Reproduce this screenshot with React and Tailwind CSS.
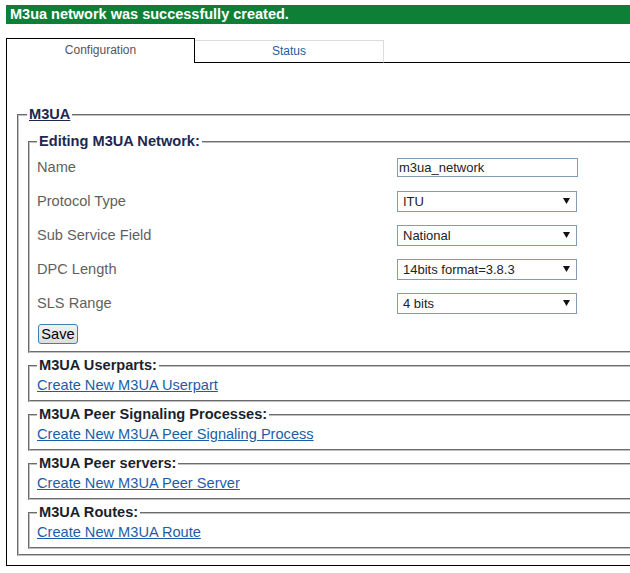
import { useState } from 'react';

const FIELDS = [
  { label: 'Name', kind: 'input', value: 'm3ua_network' },
  { label: 'Protocol Type', kind: 'select', value: 'ITU', options: ['ITU', 'ANSI'] },
  { label: 'Sub Service Field', kind: 'select', value: 'National', options: ['International', 'National', 'Reserved'] },
  { label: 'DPC Length', kind: 'select', value: '14bits format=3.8.3', options: ['14bits format=3.8.3', '14bits format=8.6', '24bits'] },
  { label: 'SLS Range', kind: 'select', value: '4 bits', options: ['4 bits', '5 bits', '8 bits'] },
];

const SECTIONS = [
  { title: 'M3UA Userparts:', link: 'Create New M3UA Userpart' },
  { title: 'M3UA Peer Signaling Processes:', link: 'Create New M3UA Peer Signaling Process' },
  { title: 'M3UA Peer servers:', link: 'Create New M3UA Peer Server' },
  { title: 'M3UA Routes:', link: 'Create New M3UA Route' },
];

function Select({ value, options }) {
  const [v, setV] = useState(value);
  return (
    <div className="relative w-[180px] h-[21px]">
      <select
        value={v}
        onChange={(e) => setV(e.target.value)}
        className="appearance-none block w-full h-full border border-[#7f9db9] bg-white pl-[5px] pr-[20px] text-[13px] text-[#222] outline-none"
      >
        {options.map(o => <option key={o}>{o}</option>)}
      </select>
      <svg className="pointer-events-none absolute right-[7px] top-[7px]" width="7" height="6" viewBox="0 0 7 6">
        <path d="M0 0H7L3.5 6Z" fill="#111" />
      </svg>
    </div>
  );
}

function Section({ title, link }) {
  return (
    <fieldset className="ml-[1px] mt-[4px] border-2 [border-style:groove] border-[#c0c0c0] pl-[7px] pt-[3px] pb-[6px] leading-[17px]">
      <legend className="px-[2px] text-[14.6px] leading-[17px] font-bold text-[#1d1f2e]">{title}</legend>
      <div className="text-[14.6px] leading-[17px]">
        <a href="#" className="text-[#1b5ea6] underline">{link}</a>
      </div>
    </fieldset>
  );
}

export default function App() {
  const [tab, setTab] = useState('config');

  return (
    <div className="w-[630px] h-[573px] overflow-hidden bg-white font-['Liberation_Sans',Arial,sans-serif]">
      <div className="w-[720px] ml-[6px] pt-[5px]">
        <div className="h-[19px] bg-[#0e7f37] px-[4px] text-[14.5px] leading-[19px] font-bold text-white">
          M3ua network was successfully created.
        </div>

        {/* tabs */}
        <div className="mt-[14px] flex items-end">
          <button
            type="button"
            onClick={() => setTab('config')}
            className="w-[189px] h-[25px] border-t border-l border-r border-black bg-white text-[12px] text-[#555] pb-[3px]"
          >
            Configuration
          </button>
          <button
            type="button"
            onClick={() => setTab('status')}
            className="w-[189px] h-[23px] border-t border-r border-[#dcdcdc] border-b border-b-black bg-white text-[12px] text-[#1f5c9a] pb-[2px]"
          >
            Status
          </button>
          <div className="flex-1 border-b border-black" />
        </div>

        <div className="border-l border-b border-black pl-[10px] pr-[10px] pt-[43px] pb-[9px]">
          <fieldset className="border-2 [border-style:groove] border-[#c0c0c0] pl-[8px] pt-[10px] pb-[5px] leading-[17px]">
            <legend className="px-[2px] text-[14.6px] leading-[17px] font-bold text-[#1c2853] underline">M3UA</legend>

            <fieldset className="ml-[1px] mb-[3px] border-2 [border-style:groove] border-[#c0c0c0] pl-[7px] pt-0 pb-[7px] leading-[17px]">
              <legend className="px-[2px] text-[14.6px] leading-[17px] font-bold text-[#1c2853]">Editing M3UA Network:</legend>
              <div className="grid grid-cols-[360px_auto]">
                {FIELDS.map(f => (
                  <div key={f.label} className="contents">
                    <div className="h-[34px] flex items-center pt-[1px] text-[14.6px] text-[#5f5f5f]">{f.label}</div>
                    <div className="h-[34px] flex items-center">
                      {f.kind === 'input' ? (
                        <input
                          defaultValue={f.value}
                          className="block w-[181px] h-[19px] border border-[#7f9db9] px-[1px] text-[13px] text-[#222] outline-none"
                        />
                      ) : (
                        <Select value={f.value} options={f.options} />
                      )}
                    </div>
                  </div>
                ))}
              </div>
              <button
                type="button"
                className="block mt-[4px] ml-[1px] w-[40px] h-[20px] rounded-[3px] border border-[#3c7fb1] bg-gradient-to-b from-[#f2f2f2] to-[#dddddd] text-[14.6px] leading-[18px] text-black"
              >
                Save
              </button>
            </fieldset>

            {SECTIONS.map(s => <Section key={s.title} {...s} />)}
          </fieldset>
        </div>
      </div>
    </div>
  );
}
